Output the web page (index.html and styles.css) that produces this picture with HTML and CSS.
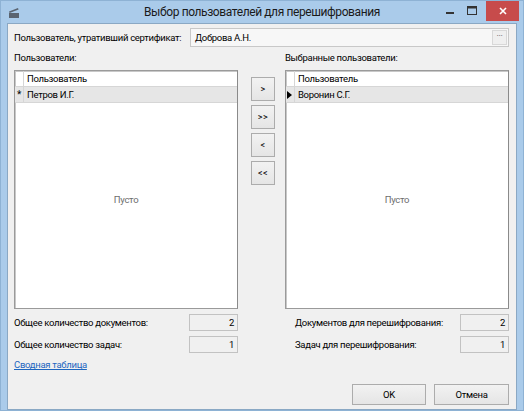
FILE: index.html
```html
<!DOCTYPE html>
<html lang="ru">
<head>
<meta charset="utf-8">
<title>Выбор пользователей для перешифрования</title>
<link rel="stylesheet" href="styles.css">
</head>
<body>
<div class="window">
  <div class="titlebar">
    <svg class="app-icon" width="12" height="12" viewBox="0 0 12 12">
      <rect x="1" y="6" width="10" height="5" fill="#5a6470"/>
      <path d="M1 4.5 L10 1 L10.6 2.6 L1.6 6 Z" fill="#5a6470"/>
    </svg>
    <div class="title">Выбор пользователей для перешифрования</div>
    <div class="caption-buttons">
      <div class="cap-btn"><svg width="10" height="10" viewBox="0 0 10 10"><rect x="1" y="6" width="8" height="2" fill="#333"/></svg></div>
      <div class="cap-btn"><svg width="10" height="10" viewBox="0 0 10 10"><rect x="0.5" y="0.5" width="9" height="8" fill="none" stroke="#333"/><rect x="0.5" y="0.5" width="9" height="2" fill="#333"/></svg></div>
      <div class="cap-btn close"><svg width="10" height="10" viewBox="0 0 10 10"><path d="M2 2 L8 8 M8 2 L2 8" stroke="#fff" stroke-width="1.6"/></svg></div>
    </div>
  </div>
  <div class="client">
    <div class="cert-row">
      <span class="cert-label">Пользователь, утративший сертификат:</span>
      <div class="cert-field">
        <span>Доброва А.Н.</span>
        <span class="ellipsis">···</span>
      </div>
    </div>
    <div class="panels">
      <div class="panel">
        <div class="panel-label">Пользователи:</div>
        <div class="grid">
          <div class="grid-head"><div class="rh"></div><div class="hc">Пользователь</div></div>
          <div class="grid-row"><div class="rh star">*</div><div class="cell">Петров И.Г.</div></div>
          <div class="empty">Пусто</div>
        </div>
      </div>
      <div class="mid">
        <button class="mv">&gt;</button>
        <button class="mv">&gt;&gt;</button>
        <button class="mv">&lt;</button>
        <button class="mv">&lt;&lt;</button>
      </div>
      <div class="panel">
        <div class="panel-label">Выбранные пользователи:</div>
        <div class="grid">
          <div class="grid-head"><div class="rh"></div><div class="hc">Пользователь</div></div>
          <div class="grid-row"><div class="rh"><svg width="5" height="8" viewBox="0 0 5 8"><path d="M0 0 L5 4 L0 8 Z" fill="#000"/></svg></div><div class="cell">Воронин С.Г.</div></div>
          <div class="empty">Пусто</div>
        </div>
      </div>
    </div>
    <div class="summary">
      <div class="sum-left">
        <div class="sum-row"><span>Общее количество документов:</span><div class="num">2</div></div>
        <div class="sum-row"><span>Общее количество задач:</span><div class="num">1</div></div>
        <a class="link" href="#">Сводная таблица</a>
      </div>
      <div class="sum-right">
        <div class="sum-row"><span>Документов для перешифрования:</span><div class="num">2</div></div>
        <div class="sum-row"><span>Задач для перешифрования:</span><div class="num">1</div></div>
      </div>
    </div>
    <div class="footer">
      <button class="btn ok">OK</button>
      <button class="btn cancel">Отмена</button>
    </div>
  </div>
</div>
</body>
</html>
```
FILE: styles.css
```css
html, body {
  margin: 0;
  padding: 0;
}
body {
  width: 524px;
  height: 418px;
  background: #ffffff;
  font-family: Roboto, "Noto Sans", sans-serif;
  font-size: 9.5px;
  letter-spacing: -0.3px;
  color: #000;
  white-space: nowrap;
}
.window {
  width: 524px;
  height: 411px;
  background: #aacbea;
  box-sizing: border-box;
  border: 1px solid #8eb2d4;
  display: flex;
  flex-direction: column;
}
.titlebar {
  height: 22px;
  position: relative;
  display: flex;
  align-items: flex-start;
}
.app-icon {
  margin: 6px 0 0 7px;
}
.title {
  position: absolute;
  left: 0;
  right: 0;
  top: 4px;
  text-align: center;
  font-size: 12px;
  letter-spacing: -0.4px;
  color: #1a1a1a;
}
.caption-buttons {
  margin-left: auto;
  margin-right: 4px;
  display: flex;
  position: relative;
}
.cap-btn {
  width: 22px;
  height: 19px;
  display: flex;
  align-items: center;
  justify-content: center;
}
.cap-btn.close {
  width: 33px;
  height: 20px;
  background: #c74b4b;
  margin-left: 3px;
}
.client {
  margin: 0 6px 0 6px;
  flex: 1;
  background: #f0f0f0;
  border: 1px solid #8aa8c4;
  box-sizing: border-box;
  padding: 4px 7px 0 6px;
  display: flex;
  flex-direction: column;
}
.cert-row {
  display: flex;
  align-items: center;
  height: 19px;
}
.cert-label {
  width: 176px;
  flex: none;
}
.cert-field {
  flex: 1;
  height: 19px;
  box-sizing: border-box;
  border: 1px solid #c8c8c8;
  background: #f7f7f7;
  display: flex;
  align-items: center;
  padding: 0 1px 0 4px;
}
.ellipsis {
  margin-left: auto;
  width: 15px;
  height: 15px;
  box-sizing: border-box;
  border: 1px solid #d8d8d8;
  background: #efefef;
  font-size: 9px;
  line-height: 11px;
  text-align: center;
  color: #555;
}
.panels {
  display: flex;
  margin-top: 3px;
}
.panel {
  width: 225px;
  display: flex;
  flex-direction: column;
}
.panel-label {
  height: 16px;
  line-height: 16px;
  margin-bottom: 4px;
}
.grid {
  height: 239px;
  box-sizing: border-box;
  border: 1px solid #9a9a9a;
  border-right-color: #8a8a8a;
  background: #fff;
  display: flex;
  flex-direction: column;
  box-shadow: inset 1px 1px 0 #c8c8c8;
}
.grid-head, .grid-row {
  display: flex;
  height: 15px;
  border-bottom: 1px solid #d6d6d6;
}
.grid-row {
  background: #e6e6e6;
}
.rh {
  width: 8px;
  flex: none;
  border-right: 1px solid #d6d6d6;
  display: flex;
  align-items: center;
  justify-content: center;
}
.rh.star {
  font-size: 10px;
  line-height: 15px;
}
.hc, .cell {
  padding-left: 3px;
  line-height: 15px;
}
.empty {
  flex: 1;
  display: flex;
  align-items: center;
  justify-content: center;
  color: #6d6d6d;
  padding-bottom: 12px;
}
.mid {
  width: 47px;
  display: flex;
  flex-direction: column;
  align-items: flex-start;
  padding: 27px 0 0 13px;
  box-sizing: border-box;
  gap: 4px;
}
.mv {
  width: 24px;
  height: 24px;
  box-sizing: border-box;
  border: 1px solid #acacac;
  background: linear-gradient(#f2f2f2, #e5e5e5);
  font-family: Roboto, sans-serif;
  font-size: 9px;
  padding: 0;
  color: #000;
  letter-spacing: 0.5px;
}
.summary {
  display: flex;
  margin-top: 5px;
}
.sum-left {
  width: 225px;
  display: flex;
  flex-direction: column;
}
.sum-right {
  width: 215px;
  margin-left: 57px;
  display: flex;
  flex-direction: column;
}
.sum-row {
  display: flex;
  align-items: center;
  justify-content: space-between;
  height: 17px;
  margin-bottom: 5px;
}
.num {
  width: 49px;
  height: 17px;
  box-sizing: border-box;
  border: 1px solid #c2c2c2;
  background: #f0f0f0;
  text-align: right;
  padding-right: 3px;
  line-height: 15px;
}
.link {
  color: #1d66c0;
  text-decoration: underline;
  line-height: 14px;
  align-self: flex-start;
}
.footer {
  display: flex;
  justify-content: flex-end;
  gap: 8px;
  margin-top: auto;
  margin-bottom: 4px;
}
.btn {
  height: 21px;
  box-sizing: border-box;
  border: 1px solid #acacac;
  background: linear-gradient(#f2f2f2, #e5e5e5);
  font-family: Roboto, sans-serif;
  font-size: 9.5px;
  letter-spacing: -0.3px;
  padding: 0;
  color: #000;
}
.ok { width: 74px; }
.cancel { width: 75px; }
```
